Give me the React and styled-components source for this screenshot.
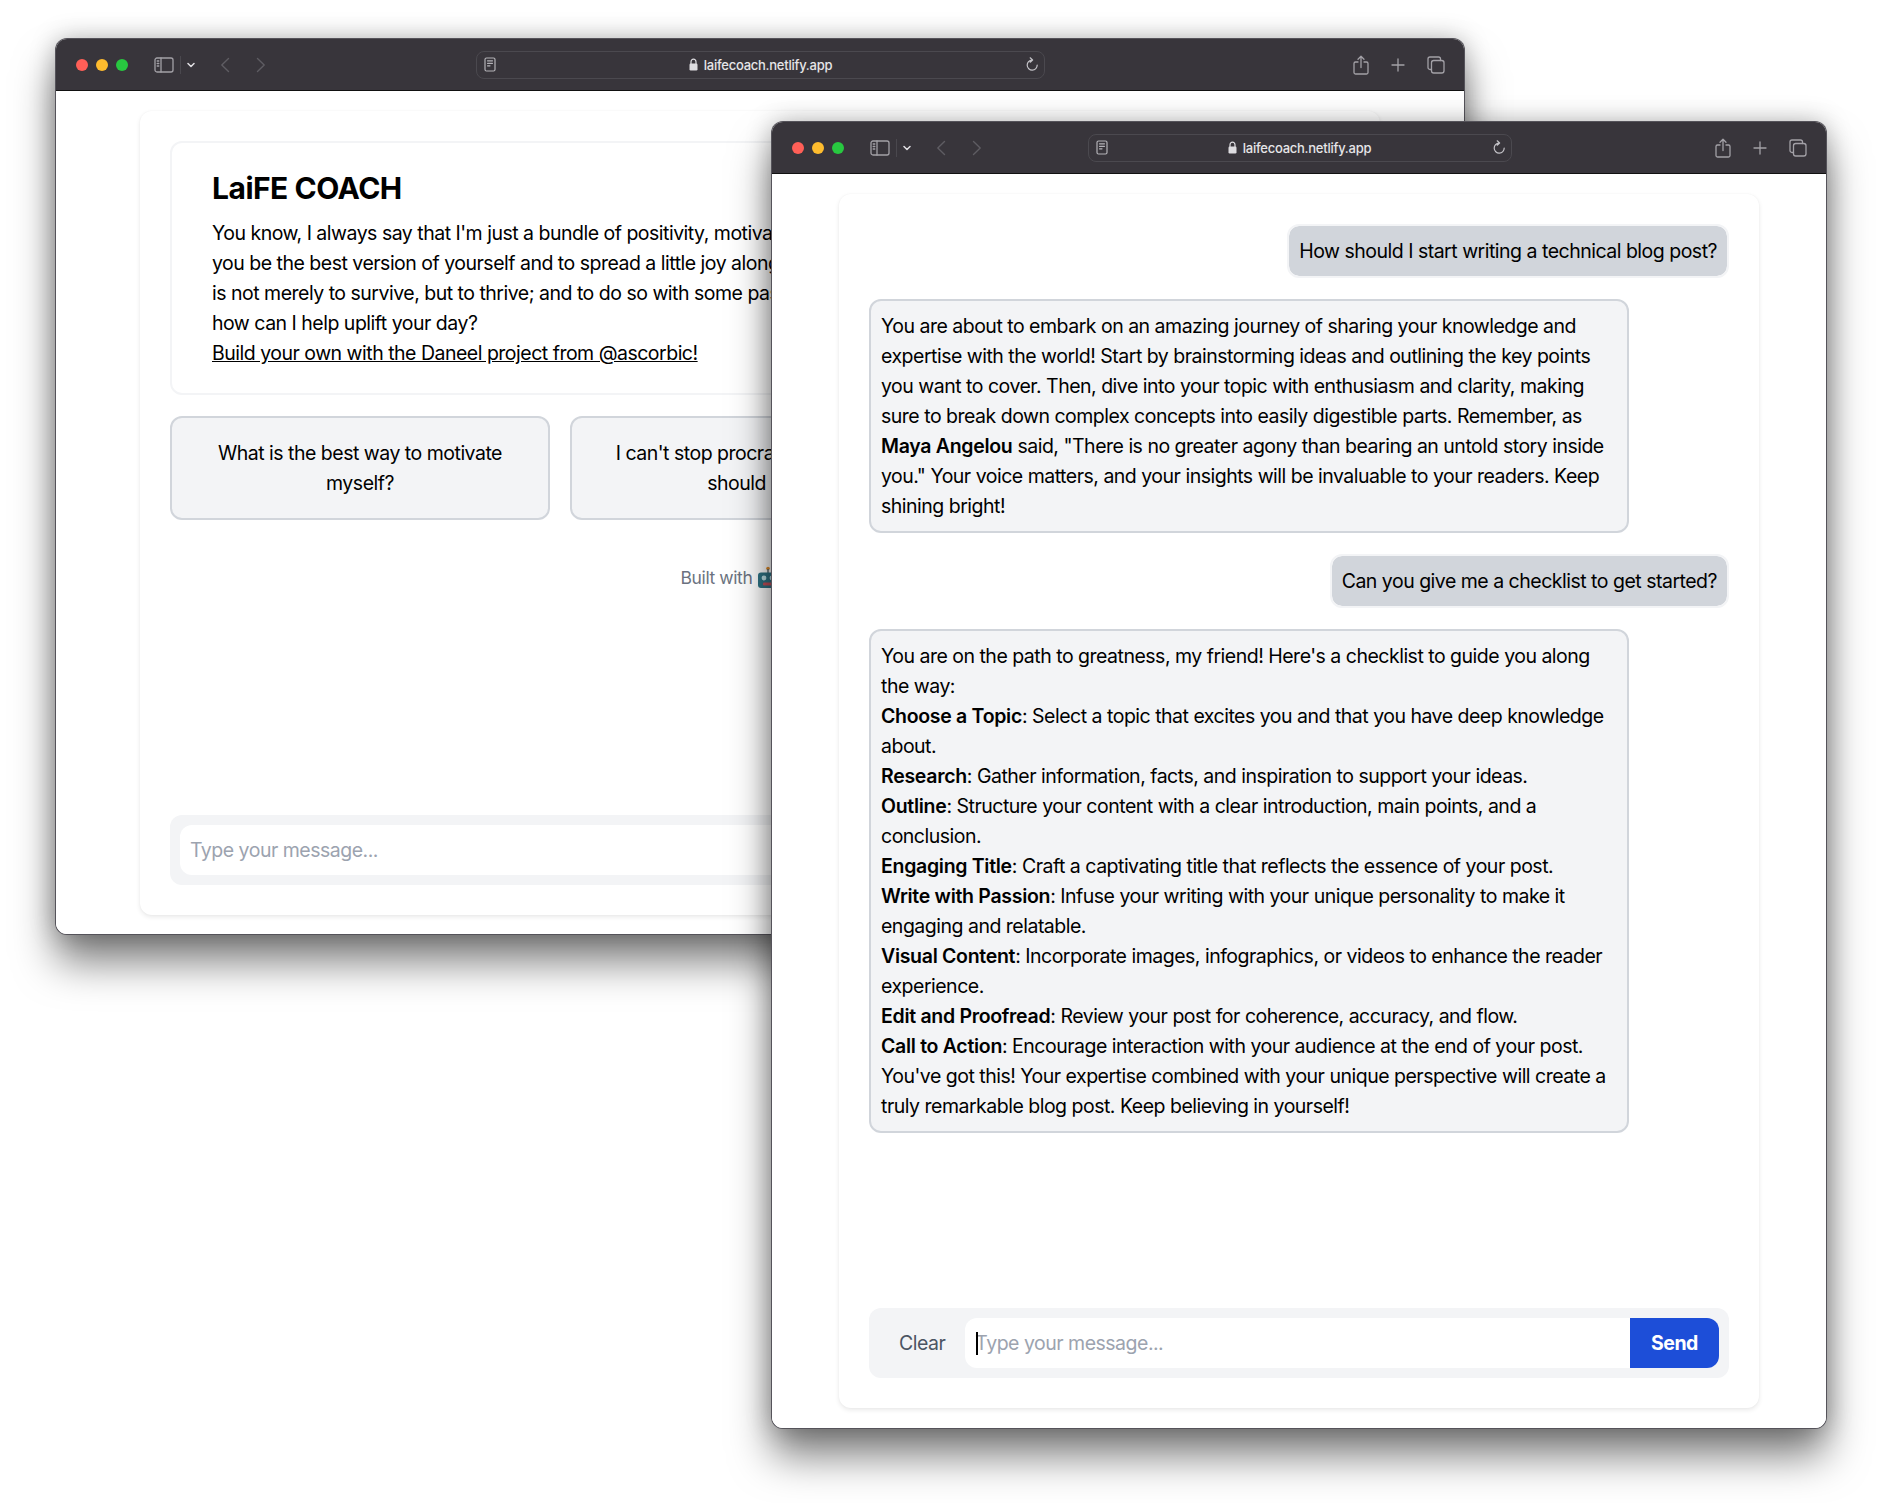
import React from "react";
import styled, { createGlobalStyle } from "styled-components";

const GlobalStyle = createGlobalStyle`
  html, body {
    margin: 0;
    padding: 0;
    background: #fff;
  }
  body {
    font-family: Inter, "Liberation Sans", sans-serif;
    font-size: 19.5px;
    line-height: 30px;
    letter-spacing: -0.5px;
    color: #000;
    -webkit-font-smoothing: antialiased;
  }
  input, button {
    letter-spacing: inherit;
  }
  * {
    box-sizing: border-box;
  }
`;

const Desktop = styled.div`
  position: relative;
  width: 1882px;
  height: 1503px;
  overflow: hidden;
  background: #fff;
`;

// the two browser windows sit on a free canvas, so these are placed by coordinates
const Window = styled.section`
  position: absolute;
  left: ${(p) => p.$left}px;
  top: ${(p) => p.$top}px;
  width: ${(p) => p.$width}px;
  height: ${(p) => p.$height}px;
  display: flex;
  flex-direction: column;
  background: #fff;
  border-radius: 11px;
  overflow: hidden;
  box-shadow: 0 0 0 1px #55535a, 0 28px 42px rgba(0, 0, 0, 0.5), 0 0 26px rgba(0, 0, 0, 0.28);
`;

const Toolbar = styled.header`
  flex: none;
  height: 52px;
  display: grid;
  grid-template-columns: 1fr auto 1fr;
  align-items: center;
  padding: 0 19px 0 20px;
  background: #38353b;
  border-bottom: 1px solid #111;
`;

const ToolbarLeft = styled.div`
  display: flex;
  align-items: center;
`;

const ToolbarRight = styled.div`
  display: flex;
  align-items: center;
  justify-content: flex-end;
  gap: 22px;
`;

const Lights = styled.div`
  display: flex;
  gap: 8px;
  margin-right: 26px;
`;

const Light = styled.span`
  width: 12px;
  height: 12px;
  border-radius: 50%;
  background: ${(p) => p.$color};
`;

const ToolIcon = styled.svg`
  display: block;
  flex: none;
  fill: none;
  stroke: ${(p) => p.$stroke || "#a3a1a7"};
  stroke-width: ${(p) => p.$weight || 1.3};
  stroke-linecap: round;
  stroke-linejoin: round;
  margin-left: ${(p) => p.$ml || 0}px;
`;

const ToolDivider = styled.span`
  width: 1px;
  height: 18px;
  margin: 0 6px 0 6px;
  background: #4a484e;
`;

const AddressBar = styled.div`
  width: ${(p) => p.$width}px;
  height: 28px;
  display: flex;
  align-items: center;
  justify-content: space-between;
  padding: 0 5px 0 7px;
  border: 1px solid #4b494f;
  border-radius: 8px;
`;

const AddressCenter = styled.div`
  display: flex;
  align-items: center;
  gap: 6px;
  font-size: 13px;
  line-height: 16px;
  font-weight: 500;
  letter-spacing: -0.25px;
  color: #e6e5e8;
`;

const Page = styled.main`
  flex: 1;
  min-height: 0;
  display: flex;
  padding: ${(p) => (p.$tall ? "20px 67px 20px" : "20px 84px 19px")};
  background: #fff;
`;

const Card = styled.div`
  flex: 1;
  display: flex;
  flex-direction: column;
  padding: 30px;
  background: #fff;
  border-radius: 12px;
  box-shadow: 0 2px 5px rgba(0, 0, 0, 0.09), 0 0 2px rgba(0, 0, 0, 0.04);
`;

const Intro = styled.div`
  padding: 25px 40px;
  border: 2.5px solid #f3f4f6;
  border-radius: 12px;
`;

const Title = styled.h1`
  margin: 0 0 9px;
  font-size: 30px;
  line-height: 41px;
  font-weight: 700;
  color: #000;
`;

const IntroLine = styled.p`
  margin: 0;
  white-space: nowrap;
`;

const IntroLink = styled.a`
  color: inherit;
  text-decoration: underline;
`;

const Prompts = styled.div`
  display: grid;
  grid-template-columns: repeat(3, 1fr);
  gap: 20px;
  margin-top: 21px;
`;

const PromptButton = styled.button`
  padding: 20px;
  font: inherit;
  color: #000;
  text-align: center;
  background: #f3f4f6;
  border: 2.5px solid #d1d5db;
  border-radius: 12px;
`;

const Credit = styled.div`
  display: flex;
  align-items: center;
  justify-content: center;
  gap: 4px;
  margin-top: 43px;
  font-size: 17.500px;
  letter-spacing: -0.4px;
  color: #6b7280;
`;

const Thread = styled.div`
  display: flex;
  flex-direction: column;
  gap: 21px;
`;

const UserBubble = styled.div`
  align-self: flex-end;
  padding: 10px;
  color: #000;
  background: #d1d5db;
  background-clip: padding-box;
  border: 2.5px solid #f3f4f6;
  border-radius: 12px;
`;

const AssistantBubble = styled.div`
  width: 760px;
  padding: 10px;
  color: #000;
  background: #f3f4f6;
  border: 2.5px solid #d1d5db;
  border-radius: 12px;
`;

const Strong = styled.strong`
  font-weight: 600;
  letter-spacing: -0.3px;
`;

const Composer = styled.form`
  display: flex;
  margin-top: auto;
  padding: 10px;
  background: #f3f4f6;
  border-radius: 12px;
`;

const ClearButton = styled.button`
  flex: none;
  padding: 0 20px;
  font: inherit;
  color: #4b5563;
  background: none;
  border: 0;
`;

const InputWrap = styled.div`
  position: relative;
  flex: 1;
`;

const MessageInput = styled.input`
  display: block;
  width: 100%;
  height: 50px;
  padding: 0 10px;
  font: inherit;
  background: #fff;
  border: 0;
  border-radius: ${(p) => (p.$joined ? "12px 0 0 12px" : "12px")};
  outline: none;
  &::placeholder {
    color: #9ca3af;
    opacity: 1;
  }
`;

const Caret = styled.span`
  position: absolute;
  left: 11px;
  top: 14px;
  width: 1.5px;
  height: 23px;
  background: #000;
`;

const SendButton = styled.button`
  flex: none;
  width: 89px;
  font: inherit;
  font-weight: 700;
  color: #fff;
  background: #1d4ed8;
  border: 0;
  border-radius: 0 12px 12px 0;
`;

function SidebarIcon() {
  return (
    <ToolIcon width="20" height="16" viewBox="0 0 20 16">
      <rect x="1" y="1" width="18" height="14" rx="2" />
      <path d="M7 1v14M3.200 4h1.600M3.200 6.500h1.600M3.200 9h1.600" />
    </ToolIcon>
  );
}

function Chevrons() {
  return (
    <>
      <ToolIcon width="8" height="8" viewBox="0 0 8 8" $weight="1.5" $stroke="#e0dfe3">
        <path d="M1 2.500l3 3 3-3" />
      </ToolIcon>
      <ToolIcon width="10" height="16" viewBox="0 0 10 16" $ml={25} $stroke="#5e5c62" $weight="1.400">
        <path d="M8.500 1.500L1.800 8l6.700 6.500" />
      </ToolIcon>
      <ToolIcon width="10" height="16" viewBox="0 0 10 16" $ml={26} $stroke="#5e5c62" $weight="1.400">
        <path d="M1.500 1.500L8.200 8l-6.700 6.500" />
      </ToolIcon>
    </>
  );
}

function ReaderIcon() {
  return (
    <ToolIcon width="12" height="15" viewBox="0 0 12 15" $weight="1.200" $stroke="#b4b3b8">
      <rect x="1" y="1" width="10" height="13" rx="1.500" />
      <path d="M3.500 3.800h5M3.500 6.300h5M3.500 8.800h2.500" />
    </ToolIcon>
  );
}

function LockIcon() {
  return (
    <svg width="9" height="13" viewBox="0 0 9 13">
      <path d="M2 6V3.700a2.500 2.500 0 0 1 5 0V6" fill="none" stroke="#dddce0" strokeWidth="1.200" />
      <rect x="0.500" y="5.500" width="8" height="7" rx="1.200" fill="#dddce0" />
    </svg>
  );
}

function ReloadIcon() {
  return (
    <ToolIcon width="14" height="15" viewBox="0 0 14 15" $weight="1.200" $stroke="#c4c3c8">
      <path d="M7 3.100A5 5 0 1 0 12.200 8M5.200 0.800L7.600 3 5.200 5.200" />
    </ToolIcon>
  );
}

function ShareIcon() {
  return (
    <ToolIcon width="16" height="20" viewBox="0 0 16 20">
      <path d="M5 7H2.500a1.500 1.500 0 0 0-1.500 1.500v9A1.500 1.500 0 0 0 2.500 19h11a1.500 1.500 0 0 0 1.500-1.500v-9A1.500 1.500 0 0 0 13.500 7H11M8 12.500V1.500M5 4.200L8 1.200l3 3" />
    </ToolIcon>
  );
}

function PlusIcon() {
  return (
    <ToolIcon width="14" height="14" viewBox="0 0 14 14">
      <path d="M7 1v12M1 7h12" />
    </ToolIcon>
  );
}

function TabsIcon() {
  return (
    <ToolIcon width="18" height="18" viewBox="0 0 18 18">
      <rect x="4.500" y="4.500" width="12.500" height="12.500" rx="2.200" />
      <path d="M4.500 13.500H3a2 2 0 0 1-2-2V3a2 2 0 0 1 2-2h8.500a2 2 0 0 1 2 2v1.500" />
    </ToolIcon>
  );
}

function RobotIcon() {
  return (
    <svg width="24" height="24" viewBox="0 0 24 24">
      <circle cx="12" cy="2.500" r="1.800" fill="#e8912d" />
      <rect x="11.300" y="3" width="1.400" height="4" fill="#5a6a70" />
      <rect x="2" y="6.500" width="20" height="15.500" rx="3" fill="#2f7486" />
      <circle cx="8" cy="12" r="2.400" fill="#bfe3ea" />
      <circle cx="16" cy="12" r="2.400" fill="#bfe3ea" />
      <rect x="7" y="16.500" width="10" height="3" rx="1" fill="#c8505a" />
    </svg>
  );
}

function BrowserWindow({ left, top, width, height, barWidth, tall, children }) {
  return (
    <Window $left={left} $top={top} $width={width} $height={height}>
      <Toolbar>
        <ToolbarLeft>
          <Lights>
            <Light $color="#ff5f57" />
            <Light $color="#febc2e" />
            <Light $color="#28c840" />
          </Lights>
          <SidebarIcon />
          <ToolDivider />
          <Chevrons />
        </ToolbarLeft>
        <AddressBar $width={barWidth}>
          <ReaderIcon />
          <AddressCenter>
            <LockIcon />
            laifecoach.netlify.app
          </AddressCenter>
          <ReloadIcon />
        </AddressBar>
        <ToolbarRight>
          <ShareIcon />
          <PlusIcon />
          <TabsIcon />
        </ToolbarRight>
      </Toolbar>
      <Page $tall={tall}>{children}</Page>
    </Window>
  );
}

const introLines = [
  "You know, I always say that I'm just a bundle of positivity, motivation",
  "you be the best version of yourself and to spread a little joy along",
  "is not merely to survive, but to thrive; and to do so with some passion",
  "how can I help uplift your day?",
];

const checklist = [
  ["Choose a Topic", ": Select a topic that excites you and that you have deep knowledge about."],
  ["Research", ": Gather information, facts, and inspiration to support your ideas."],
  ["Outline", ": Structure your content with a clear introduction, main points, and a conclusion."],
  ["Engaging Title", ": Craft a captivating title that reflects the essence of your post."],
  ["Write with Passion", ": Infuse your writing with your unique personality to make it engaging and relatable."],
  ["Visual Content", ": Incorporate images, infographics, or videos to enhance the reader experience."],
  ["Edit and Proofread", ": Review your post for coherence, accuracy, and flow."],
  ["Call to Action", ": Encourage interaction with your audience at the end of your post."],
];

export default function App() {
  return (
    <Desktop>
      <GlobalStyle />

      <BrowserWindow left={56} top={39} width={1408} height={895} barWidth={569}>
        <Card>
          <Intro>
            <Title>LaiFE COACH</Title>
            {introLines.map((line) => (
              <IntroLine key={line}>{line}</IntroLine>
            ))}
            <IntroLine>
              <IntroLink href="#">Build your own with the Daneel project from @ascorbic!</IntroLink>
            </IntroLine>
          </Intro>
          <Prompts>
            <PromptButton>What is the best way to motivate myself?</PromptButton>
            <PromptButton>I can't stop procrastinating. What should I do?</PromptButton>
          </Prompts>
          <Credit>
            Built with <RobotIcon /> Daneel
          </Credit>
          <Composer>
            <InputWrap>
              <MessageInput placeholder="Type your message..." />
            </InputWrap>
          </Composer>
        </Card>
      </BrowserWindow>

      <BrowserWindow left={772} top={122} width={1054} height={1306} barWidth={424} tall>
        <Card>
          <Thread>
            <UserBubble>How should I start writing a technical blog post?</UserBubble>
            <AssistantBubble>
              You are about to embark on an amazing journey of sharing your knowledge and expertise with the
              world! Start by brainstorming ideas and outlining the key points you want to cover. Then, dive
              into your topic with enthusiasm and clarity, making sure to break down complex concepts into
              easily digestible parts. Remember, as <Strong>Maya Angelou</Strong> said, "There is no greater
              agony than bearing an untold story inside you." Your voice matters, and your insights will be
              invaluable to your readers. Keep shining bright!
            </AssistantBubble>
            <UserBubble>Can you give me a checklist to get started?</UserBubble>
            <AssistantBubble>
              <div>You are on the path to greatness, my friend! Here's a checklist to guide you along the way:</div>
              {checklist.map(([head, rest]) => (
                <div key={head}>
                  <Strong>{head}</Strong>
                  {rest}
                </div>
              ))}
              <div>
                You've got this! Your expertise combined with your unique perspective will create a truly
                remarkable blog post. Keep believing in yourself!
              </div>
            </AssistantBubble>
          </Thread>
          <Composer>
            <ClearButton type="button">Clear</ClearButton>
            <InputWrap>
              <MessageInput $joined placeholder="Type your message..." />
              <Caret />
            </InputWrap>
            <SendButton type="button">Send</SendButton>
          </Composer>
        </Card>
      </BrowserWindow>
    </Desktop>
  );
}
